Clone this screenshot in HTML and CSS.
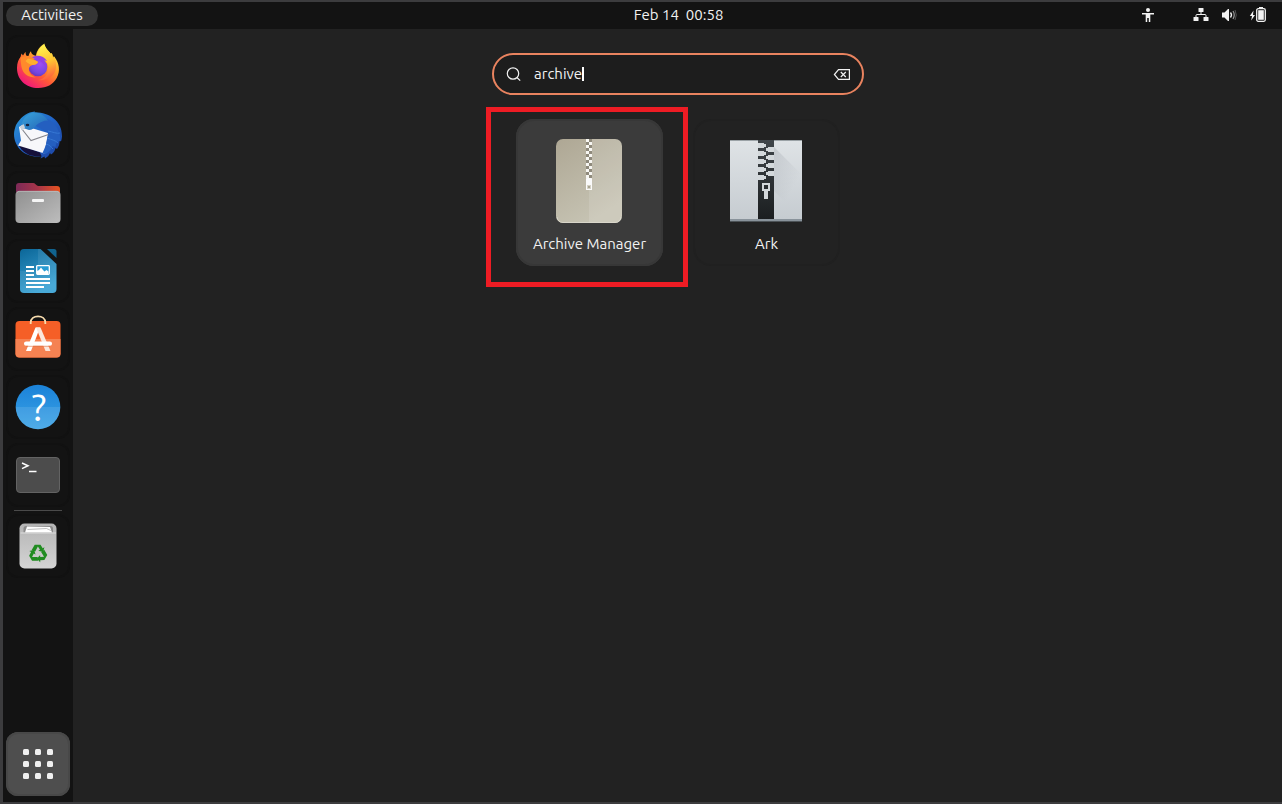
FILE: index.html
```
<!DOCTYPE html>
<html lang="en">
<head>
    <meta charset="UTF-8">
    <meta name="viewport" content="width=device-width, initial-scale=1.0">
    <title>Activities</title>
    <link rel="stylesheet" href="styles.css">
</head>
<body>
    <header class="topbar">
        <button class="activities">Activities</button>
        <button class="clock">Feb 14&nbsp; 00:58</button>
        <div class="status">
            <button class="status-item accessibility" aria-label="Accessibility">
                <svg width="16" height="16" viewBox="0 0 16 16" fill="#f2f2f2">
                    <circle cx="8" cy="3" r="2"/>
                    <path d="M2 6h12v1.500h-3.700V15H8.800v-4H7.200v4H5.700V7.500H2z"/>
                </svg>
            </button>
            <button class="status-item" aria-label="Network">
                <svg width="16" height="16" viewBox="0 0 16 16" fill="#f2f2f2">
                    <rect x="5.500" y="1" width="5" height="4" rx=".6"/>
                    <rect x="0.500" y="10" width="5" height="4" rx=".6"/>
                    <rect x="10.500" y="10" width="5" height="4" rx=".6"/>
                    <path d="M8 5v2.500M3 10V8.500q0-1 1-1h8q1 0 1 1V10" fill="none" stroke="#f2f2f2"/>
                </svg>
            </button>
            <button class="status-item" aria-label="Volume">
                <svg width="16" height="16" viewBox="0 0 16 16" fill="#f2f2f2">
                    <path d="M1 5.500h2.500L7 2h1v12H7l-3.500-3.500H1z"/>
                    <path d="M9.500 5.500q2 2.500 0 5" fill="none" stroke="#f2f2f2" stroke-width="1.300"/>
                    <path d="M12 4q2.500 4 0 8" fill="none" stroke="#999" stroke-width="1.200"/>
                    <path d="M14 3q2.500 5 0 10" fill="none" stroke="#555" stroke-width="1"/>
                </svg>
            </button>
            <button class="status-item" aria-label="Battery">
                <svg width="18" height="16" viewBox="0 0 18 16" fill="#f2f2f2">
                    <path d="M4.500 3.500L.8 9h2.200l-.8 4.500L6 8H4z"/>
                    <rect x="10" y="0" width="4" height="2"/>
                    <rect x="7.700" y="1.700" width="8.600" height="12.600" rx="1.500" fill="none" stroke="#f2f2f2" stroke-width="1.300"/>
                    <rect x="9.200" y="3.200" width="5.600" height="9.600"/>
                </svg>
            </button>
        </div>
    </header>

    <div class="desktop">
        <nav class="dock">
            <button class="dock-item" aria-label="Firefox">
                <svg width="48" height="48" viewBox="0 0 48 48">
                    <defs>
                        <linearGradient id="ff-body" x1=".85" y1=".1" x2=".25" y2=".95">
                            <stop offset="0" stop-color="#fff44f"/>
                            <stop offset=".35" stop-color="#ffa42a"/>
                            <stop offset=".65" stop-color="#ff5a36"/>
                            <stop offset="1" stop-color="#f01a78"/>
                        </linearGradient>
                        <linearGradient id="ff-flame" x1=".4" y1="0" x2=".6" y2="1">
                            <stop offset="0" stop-color="#fff44f"/>
                            <stop offset=".5" stop-color="#ffc233"/>
                            <stop offset="1" stop-color="#ff5a3c"/>
                        </linearGradient>
                        <radialGradient id="ff-globe" cx=".6" cy=".35" r=".8">
                            <stop offset="0" stop-color="#a04df5"/>
                            <stop offset=".6" stop-color="#7547e0"/>
                            <stop offset="1" stop-color="#5a2fa8"/>
                        </radialGradient>
                    </defs>
                    <path d="M30.500 1.500c1.500 5 4 6 6.500 9.500l.8-1c.8 2 1 3.500 1.200 5l1.200-1.500c5 6.500 6.500 14.500 2.500 21.500-3.500 6.500-10 10-18.500 10C12 45 3 37 3 25c0-5 1.500-8.500 3.500-11l1-3.500 1.500 2 2.500-3.800c0 2 .5 3 1 4l2 .3c.5-2 1-3.500 2.500-4.800 0 2.500 2 4 5 4.500.5-4.500 3.500-9 8.500-12.200z" fill="url(#ff-body)"/>
                    <path d="M30.500 1.500C25.500 4.500 23 8.500 22.500 13c6.500 1 12 5.500 12 12 0 7-5 11.500-10.500 12 11.500 1.500 19-6 18-16-.2-3-.8-5.500-2.300-8L39 15c-.2-1.500-.4-3-1.200-5l-.8 1c-2.500-3.500-5-4.500-6.500-9.500z" fill="url(#ff-flame)"/>
                    <circle cx="24" cy="24" r="9.300" fill="url(#ff-globe)"/>
                    <path d="M18 14.500c4-3 12-2 15 3.500-1.500-.8-3-1-4.500-.7 3 2 4.500 5 4.300 8C30 20 25 17 18 14.500z" fill="#9440e4"/>
                    <path d="M6.500 14.500c3-1.600 7-1.600 9.500-1 2.500 2.500 6 3.500 8 5.500-.5 2-3 2.800-5.500 3-2 .8-3.500 2-3.700 4 .2 4 3 7 7 8.500-8 0-13-4-14.300-10.500C7 20.500 6.500 17 6.500 14.500z" fill="#ff8a2b"/>
                    <path d="M14 15.500c3 1 8 1.500 10 3.500-.5 2-3 2.800-5.500 3-3-.5-5-2-7-4z" fill="#ffb02e"/>
                </svg>
            </button>
            <button class="dock-item" aria-label="Thunderbird">
                <svg width="48" height="48" viewBox="0 0 48 48">
                    <defs>
                        <linearGradient id="tb-body" x1="0" y1="0" x2="1" y2="1">
                            <stop offset="0" stop-color="#2a9bd8"/>
                            <stop offset=".5" stop-color="#2163c8"/>
                            <stop offset="1" stop-color="#1c3f9c"/>
                        </linearGradient>
                        <linearGradient id="tb-head" x1="0" y1="0" x2="1" y2="1">
                            <stop offset="0" stop-color="#39a5dd"/>
                            <stop offset="1" stop-color="#2463b5"/>
                        </linearGradient>
                    </defs>
                    <path d="M2 14C6 7 12 2 18 1l3-.5-.5 1C34 1 48 9 48 25c0 2-.5 4-1 5.500l-1.500-1c.3 3-.7 6-2.500 8.500l-1.500-1c-.5 3-2 5-4.500 6.500L36 42c-1 2.500-2.500 4-5 5.500l-.5-2-4 2 1-2.500C14 48 0 38 0 23c0-3 1-6 2-9z" fill="url(#tb-body)"/>
                    <path d="M4 33l22 8.500 1.500 3.500C17 46.500 8 42 4 33z" fill="#15103a"/>
                    <path d="M5 16l4-2.500 5 2.500 20 6-3.500 20.500L4 34.500l3-5z" fill="#f7f7fa"/>
                    <path d="M7.500 17.500l9.500 12L34.500 23.500" fill="none" stroke="#85858c" stroke-width="1.100"/>
                    <path d="M20 14l15 8-1.500 4.500c-1 6-2.500 10.500-5 15.500l3 1c4-2 6-5 7-8l3 1 1-5 4-1c0-9-5-19-13-22z" fill="#245fc0"/>
                    <path d="M7.500 13C10 5 16 1 22 1.500c6 1 9 4 12 8-5 0-9 2-12 5-1.500 2.500-4 4.500-7 4.500l-6-2z" fill="url(#tb-head)"/>
                    <path d="M5.500 16l4-3 1.500 3.500-2.500 3z" fill="#c9d0d9"/>
                    <ellipse cx="13.500" cy="14" rx="1.800" ry="1.300" fill="#17233e"/>
                    <path d="M34 20c5 1 9 3 12 2M33 27c5 2 8 2 11 5M32 33c4 1 5 3 7 5" fill="none" stroke="#3678d4"/>
                </svg>
            </button>
            <button class="dock-item" aria-label="Files">
                <svg width="48" height="48" viewBox="0 0 48 48">
                    <defs>
                        <linearGradient id="files-back">
                            <stop offset="0" stop-color="#7d2a58"/>
                            <stop offset=".5" stop-color="#a83548"/>
                            <stop offset="1" stop-color="#e95420"/>
                        </linearGradient>
                        <linearGradient id="files-front" x1="0" y1="0" x2="1" y2="1">
                            <stop offset="0" stop-color="#909090"/>
                            <stop offset="1" stop-color="#bdbdbd"/>
                        </linearGradient>
                    </defs>
                    <path d="M2 20V7q0-3 3-3h14q1.500 0 2.500 1.200T24 7h19q3 0 3 3v10z" fill="url(#files-back)"/>
                    <rect x="1.500" y="12" width="45" height="32" rx="4" fill="url(#files-front)"/>
                    <path d="M3 13.500q1-1.200 2.500-1.200h37q1.500 0 2.500 1.200" fill="none" stroke="#c4c4c4" stroke-width=".7"/>
                    <rect x="18" y="20" width="12" height="3" rx="1" fill="#f5f5f5"/>
                </svg>
            </button>
            <button class="dock-item" aria-label="LibreOffice Writer">
                <svg width="48" height="48" viewBox="0 0 48 48">
                    <defs>
                        <linearGradient id="writer-page" x1="0" y1="0" x2=".4" y2="1">
                            <stop offset="0" stop-color="#0b6698"/>
                            <stop offset="1" stop-color="#3ba3d4"/>
                        </linearGradient>
                    </defs>
                    <path d="M10 2h16.500L42.500 17v25q0 4-4 4H10q-4 0-4-4V6q0-4 4-4z" fill="url(#writer-page)"/>
                    <path d="M24 2h2.500L42.500 17v7H24z" fill="#fff" opacity=".08"/>
                    <path d="M6 24h36.500v18q0 4-4 4H10q-4 0-4-4z" fill="#fff" opacity=".07"/>
                    <path d="M33 2h7q2.500 0 2.500 2.500V11z" fill="#10638f"/>
                    <path d="M12 20h8M12 24h8M12 28h8M12 32h24M12 36h24M12 40h18" stroke="#fff" stroke-width="2"/>
                    <rect x="22.700" y="18.700" width="12.600" height="8.600" rx=".8" fill="#279bd3" stroke="#fff" stroke-width="1.300"/>
                    <path d="M23 27v-3l2-1 2-2.500 2 2.500 1.500 1.500 2-1.500 2 1.500V27z" fill="#fff"/>
                </svg>
            </button>
            <button class="dock-item" aria-label="Ubuntu Software">
                <svg width="48" height="48" viewBox="0 0 48 48">
                    <rect x="1.500" y="6" width="45" height="36.500" rx="4" fill="#f55f27"/>
                    <path d="M1.500 24h45v14.500q0 4-4 4h-37q-4 0-4-4z" fill="#f58252"/>
                    <path d="M16.700 9V7.500C16.700 3.500 20 1.300 24 1.300s7.300 2.200 7.300 6.200V9" fill="none" stroke="#f7dcae" stroke-width="1.800"/>
                    <path d="M21.500 12.500h4.500l-9 23.500h-5z" fill="#fff"/>
                    <path d="M22 12.500h4.500L36.500 36h-5z" fill="#fbe7dc"/>
                    <rect x="10" y="26.500" width="28" height="4.300" rx="2.100" fill="#fff"/>
                    <path d="M12 31.300h24" stroke="#d96b3e" stroke-width=".6"/>
                </svg>
            </button>
            <button class="dock-item" aria-label="Help">
                <svg width="48" height="48" viewBox="0 0 48 48">
                    <defs>
                        <clipPath id="help-clip"><circle cx="24" cy="24" r="22.300"/></clipPath>
                        <linearGradient id="help-bg" x1="0" y1="0" x2="0" y2="1">
                            <stop offset="0" stop-color="#1b82d8"/>
                            <stop offset="1" stop-color="#3ba3e6"/>
                        </linearGradient>
                    </defs>
                    <circle cx="24" cy="24" r="22.300" fill="url(#help-bg)"/>
                    <rect x="0" y="24" width="48" height="24" fill="#fff" opacity=".1" clip-path="url(#help-clip)"/>
                    <text class="help-mark" x="25" y="38" text-anchor="middle">?</text>
                </svg>
            </button>
            <button class="dock-item" aria-label="Terminal">
                <svg width="48" height="48" viewBox="0 0 48 48">
                    <rect x="2.500" y="6.500" width="43" height="35" rx="3.500" fill="#4c4c4c" stroke="#636363"/>
                    <path d="M8 12l6 2.800L8 17.600" fill="none" stroke="#fff" stroke-width="1.500"/>
                    <path d="M15 20.500h7.500" stroke="#fff" stroke-width="1.500"/>
                </svg>
            </button>
            <div class="dock-separator"></div>
            <button class="dock-item" aria-label="Trash">
                <svg width="48" height="48" viewBox="0 0 48 48">
                    <defs>
                        <linearGradient id="trash-bg" x1="0" y1="0" x2="0" y2="1">
                            <stop offset="0" stop-color="#b4b4b4"/>
                            <stop offset="1" stop-color="#d4d4d4"/>
                        </linearGradient>
                        <path id="recycle-arrow" d="M-6.300-3.600l3-5.200h5.800l2.200 3.500 1.700-1-1.300 4.800-4.800-1.200 1.700-1-2.100-3.200-2.700 4.900z"/>
                    </defs>
                    <rect x="5.500" y="1.500" width="37" height="45" rx="5" fill="url(#trash-bg)"/>
                    <path d="M9.500 10.500V6.500q0-2.500 2.500-2.500h24.500q2.500 0 2.500 2.500v4z" fill="#8a8a8a"/>
                    <path d="M11 10.500L13 4.500l23 .5 2 5.500z" fill="#fff"/>
                    <path d="M13.500 7.500l19-1 4.500 2" fill="none" stroke="#a5a5a5" stroke-width=".7"/>
                    <path d="M6.500 11h35.500" stroke="#dedede"/>
                    <g transform="translate(24 31.500)" fill="#218c21">
                        <use href="#recycle-arrow"/>
                        <use href="#recycle-arrow" transform="rotate(120)"/>
                        <use href="#recycle-arrow" transform="rotate(240)"/>
                    </g>
                </svg>
            </button>
            <button class="dock-item show-apps" aria-label="Show Applications">
                <svg width="64" height="64" viewBox="0 0 64 64" fill="#f0f0f0">
                    <rect x="17" y="17" width="6" height="6" rx="1.500"/>
                    <rect x="29" y="17" width="6" height="6" rx="1.500"/>
                    <rect x="41" y="17" width="6" height="6" rx="1.500"/>
                    <rect x="17" y="29" width="6" height="6" rx="1.500"/>
                    <rect x="29" y="29" width="6" height="6" rx="1.500"/>
                    <rect x="41" y="29" width="6" height="6" rx="1.500"/>
                    <rect x="17" y="41" width="6" height="6" rx="1.500"/>
                    <rect x="29" y="41" width="6" height="6" rx="1.500"/>
                    <rect x="41" y="41" width="6" height="6" rx="1.500"/>
                </svg>
            </button>
        </nav>

        <main class="overview">
            <div class="search">
                <label class="search-label" for="search-input" aria-label="Search">
                    <svg width="16" height="16" viewBox="0 0 16 16" fill="none" stroke="#f2f2f2" stroke-width="1.200">
                        <circle cx="7" cy="7.500" r="5.700"/>
                        <path d="M11 11.500l3.200 3.200"/>
                    </svg>
                </label>
                <input type="text" id="search-input" class="search-input" value="archive" autocomplete="off" spellcheck="false">
                <span class="caret"></span>
                <button class="search-clear" aria-label="Clear">
                    <svg width="18" height="12" viewBox="0 0 18 12" fill="none" stroke="#f2f2f2" stroke-width="1.200">
                        <path d="M5.500 1.600h10.900v9.800H5.500L1.400 6.500z"/>
                        <path d="M7.800 4l5 5M12.800 4l-5 5"/>
                    </svg>
                </button>
            </div>

            <div class="results">
                <button class="app selected">
                    <svg width="73" height="84" viewBox="0 0 73 84">
                        <defs>
                            <linearGradient id="am-bg" x1="0" y1="0" x2=".5" y2="1">
                                <stop offset="0" stop-color="#aea794"/>
                                <stop offset="1" stop-color="#c6c3b3"/>
                            </linearGradient>
                            <pattern id="am-teeth" x="33" y="0" width="6" height="6" patternUnits="userSpaceOnUse">
                                <rect width="6" height="6" fill="#8f8a7c"/>
                                <rect width="3" height="3" fill="#f7f6f2"/>
                                <rect x="3" y="3" width="3" height="3" fill="#f7f6f2"/>
                            </pattern>
                        </defs>
                        <rect x="3" y="0" width="66" height="84" rx="7" fill="url(#am-bg)"/>
                        <path d="M36 0h26q7 0 7 7v70q0 7-7 7H36z" fill="#fff" opacity=".12"/>
                        <path d="M4 78q1 5.500 6 5.500h52q5 0 6-5.500" fill="none" stroke="#dddbcf" stroke-width=".8"/>
                        <rect x="33" y="0" width="6" height="39" fill="url(#am-teeth)"/>
                        <rect x="33" y="39" width="6" height="12" rx=".5" fill="#fafafa"/>
                        <rect x="34.500" y="46.500" width="3" height="3" fill="#a8a492" stroke="#d5d2c6"/>
                    </svg>
                    <span class="app-name">Archive Manager</span>
                </button>
                <button class="app">
                    <svg width="73" height="84" viewBox="0 0 73 84">
                        <defs>
                            <linearGradient id="ark-bg" x1="0" y1="0" x2="0" y2="1">
                                <stop offset="0" stop-color="#dfe3e6"/>
                                <stop offset="1" stop-color="#c5cbd0"/>
                            </linearGradient>
                            <linearGradient id="ark-zip" x1="0" y1="0" x2="0" y2="1">
                                <stop offset="0" stop-color="#40464a"/>
                                <stop offset="1" stop-color="#1b1e20"/>
                            </linearGradient>
                            <linearGradient id="ark-shadow" x1="0" y1="0" x2=".5" y2=".7">
                                <stop offset="0" stop-color="#a4a9b0" stop-opacity=".4"/>
                                <stop offset="1" stop-color="#a4a9b0" stop-opacity="0"/>
                            </linearGradient>
                        </defs>
                        <rect x="0" y="1" width="72" height="82" fill="url(#ark-bg)"/>
                        <path d="M0 1.500h72" stroke="#9ba2a6"/>
                        <path d="M44 8l28 28v44L44 52z" fill="url(#ark-shadow)"/>
                        <rect x="0" y="80" width="72" height="2" fill="#89939b"/>
                        <rect x="0" y="82" width="72" height="1" fill="#4d5357"/>
                        <rect x="28" y="1" width="16" height="79" fill="url(#ark-zip)"/>
                        <g fill="#d3d8db">
                            <path d="M28 4h6v1h2v3h-2v1h-6zM28 12h6v1h2v3h-2v1h-6zM28 20h6v1h2v3h-2v1h-6zM28 28h6v1h2v3h-2v1h-6zM28 36h6v1h2v3h-2v1h-6z"/>
                            <path d="M44 8h-6v1h-2v3h2v1h6zM44 16h-6v1h-2v3h2v1h6zM44 24h-6v1h-2v3h2v1h6zM44 32h-6v1h-2v3h2v1h6z"/>
                            <path d="M32 44h8v8h-2v8h-4v-8h-2zM34 46v4h4v-4z" fill-rule="evenodd"/>
                        </g>
                    </svg>
                    <span class="app-name">Ark</span>
                </button>
            </div>
        </main>
    </div>
</body>
</html>
```

FILE: styles.css
```
* {
    box-sizing: border-box;
}
body {
    margin: 0;
    min-height: 100vh;
    display: flex;
    flex-direction: column;
    border: 2px solid #3c3c3e;
    border-left-width: 3px;
    border-right: none;
    background-color: #222;
    color: #f2f2f2;
    font-family: Ubuntu, "Noto Sans", sans-serif;
    font-size: 15px;
    line-height: 20px;
}
button {
    padding: 0;
    border: none;
    background: none;
    color: inherit;
    font: inherit;
    cursor: pointer;
}
svg {
    display: block;
}

/* top bar */
.topbar {
    display: grid;
    grid-template-columns: 1fr auto 1fr;
    align-items: center;
    height: 27px;
    padding: 0 0 1px 72px;
    background-color: #131313;
}
.activities {
    justify-self: start;
    width: 92px;
    height: 21px;
    margin-left: -69px;
    border-radius: 11px;
    background-color: #353535;
}
.status {
    display: flex;
    justify-content: flex-end;
    align-items: center;
    gap: 12px;
    padding-right: 15px;
}
.accessibility {
    margin-right: 25px;
}

/* dock */
.desktop {
    flex: 1;
    display: flex;
}
.dock {
    display: flex;
    flex-direction: column;
    align-items: center;
    width: 70px;
    padding: 4px 0;
    background-color: #131313;
}
.dock-item {
    display: flex;
    align-items: center;
    justify-content: center;
    width: 64px;
    height: 64px;
    margin: 2px 0;
    border-radius: 12px;
    box-shadow: inset 0 0 0 2px #111;
}
.dock-item:hover {
    background-color: #2c2c2c;
}
.dock-separator {
    width: 48px;
    height: 1px;
    margin: 1px 0;
    background-color: #4a4a4a;
}
.show-apps {
    margin-top: auto;
    background-color: #4e4e4e;
    box-shadow: inset 0 0 0 2px #484848;
}
.help-mark {
    fill: #fff;
    font-family: Ubuntu, "Noto Sans", sans-serif;
    font-size: 38px;
}

/* search */
.overview {
    flex: 1;
    display: flex;
    flex-direction: column;
    align-items: center;
    gap: 24px;
    padding: 24px 0 0 1px;
}
.search {
    display: flex;
    align-items: center;
    width: 372px;
    height: 42px;
    padding: 0 11px 0 12px;
    border: 2px solid #e9835f;
    border-radius: 21px;
    background-color: #1d1d1d;
}
.search-label {
    margin-right: 12px;
}
.search-input {
    field-sizing: content;
    padding: 0;
    border: none;
    outline: none;
    background: none;
    color: inherit;
    font: inherit;
    caret-color: transparent;
}
.caret {
    width: 2px;
    height: 14px;
    background-color: #fff;
}
.search-clear {
    margin-left: auto;
}

/* search results */
.results {
    display: flex;
    gap: 30px;
}
.app {
    position: relative;
    display: flex;
    flex-direction: column;
    align-items: center;
    gap: 11px;
    width: 147px;
    height: 147px;
    padding-top: 20px;
    border-radius: 18px;
    box-shadow: inset 0 0 0 2px #202020;
}
.selected {
    background-color: #3b3b3b;
    box-shadow: inset 0 0 0 2px #373737;
}
/* red frame around the highlighted result */
.selected::after {
    content: "";
    position: absolute;
    top: -12px;
    right: -25px;
    bottom: -21px;
    left: -30px;
    border: 5px solid #ee1c24;
}
```
